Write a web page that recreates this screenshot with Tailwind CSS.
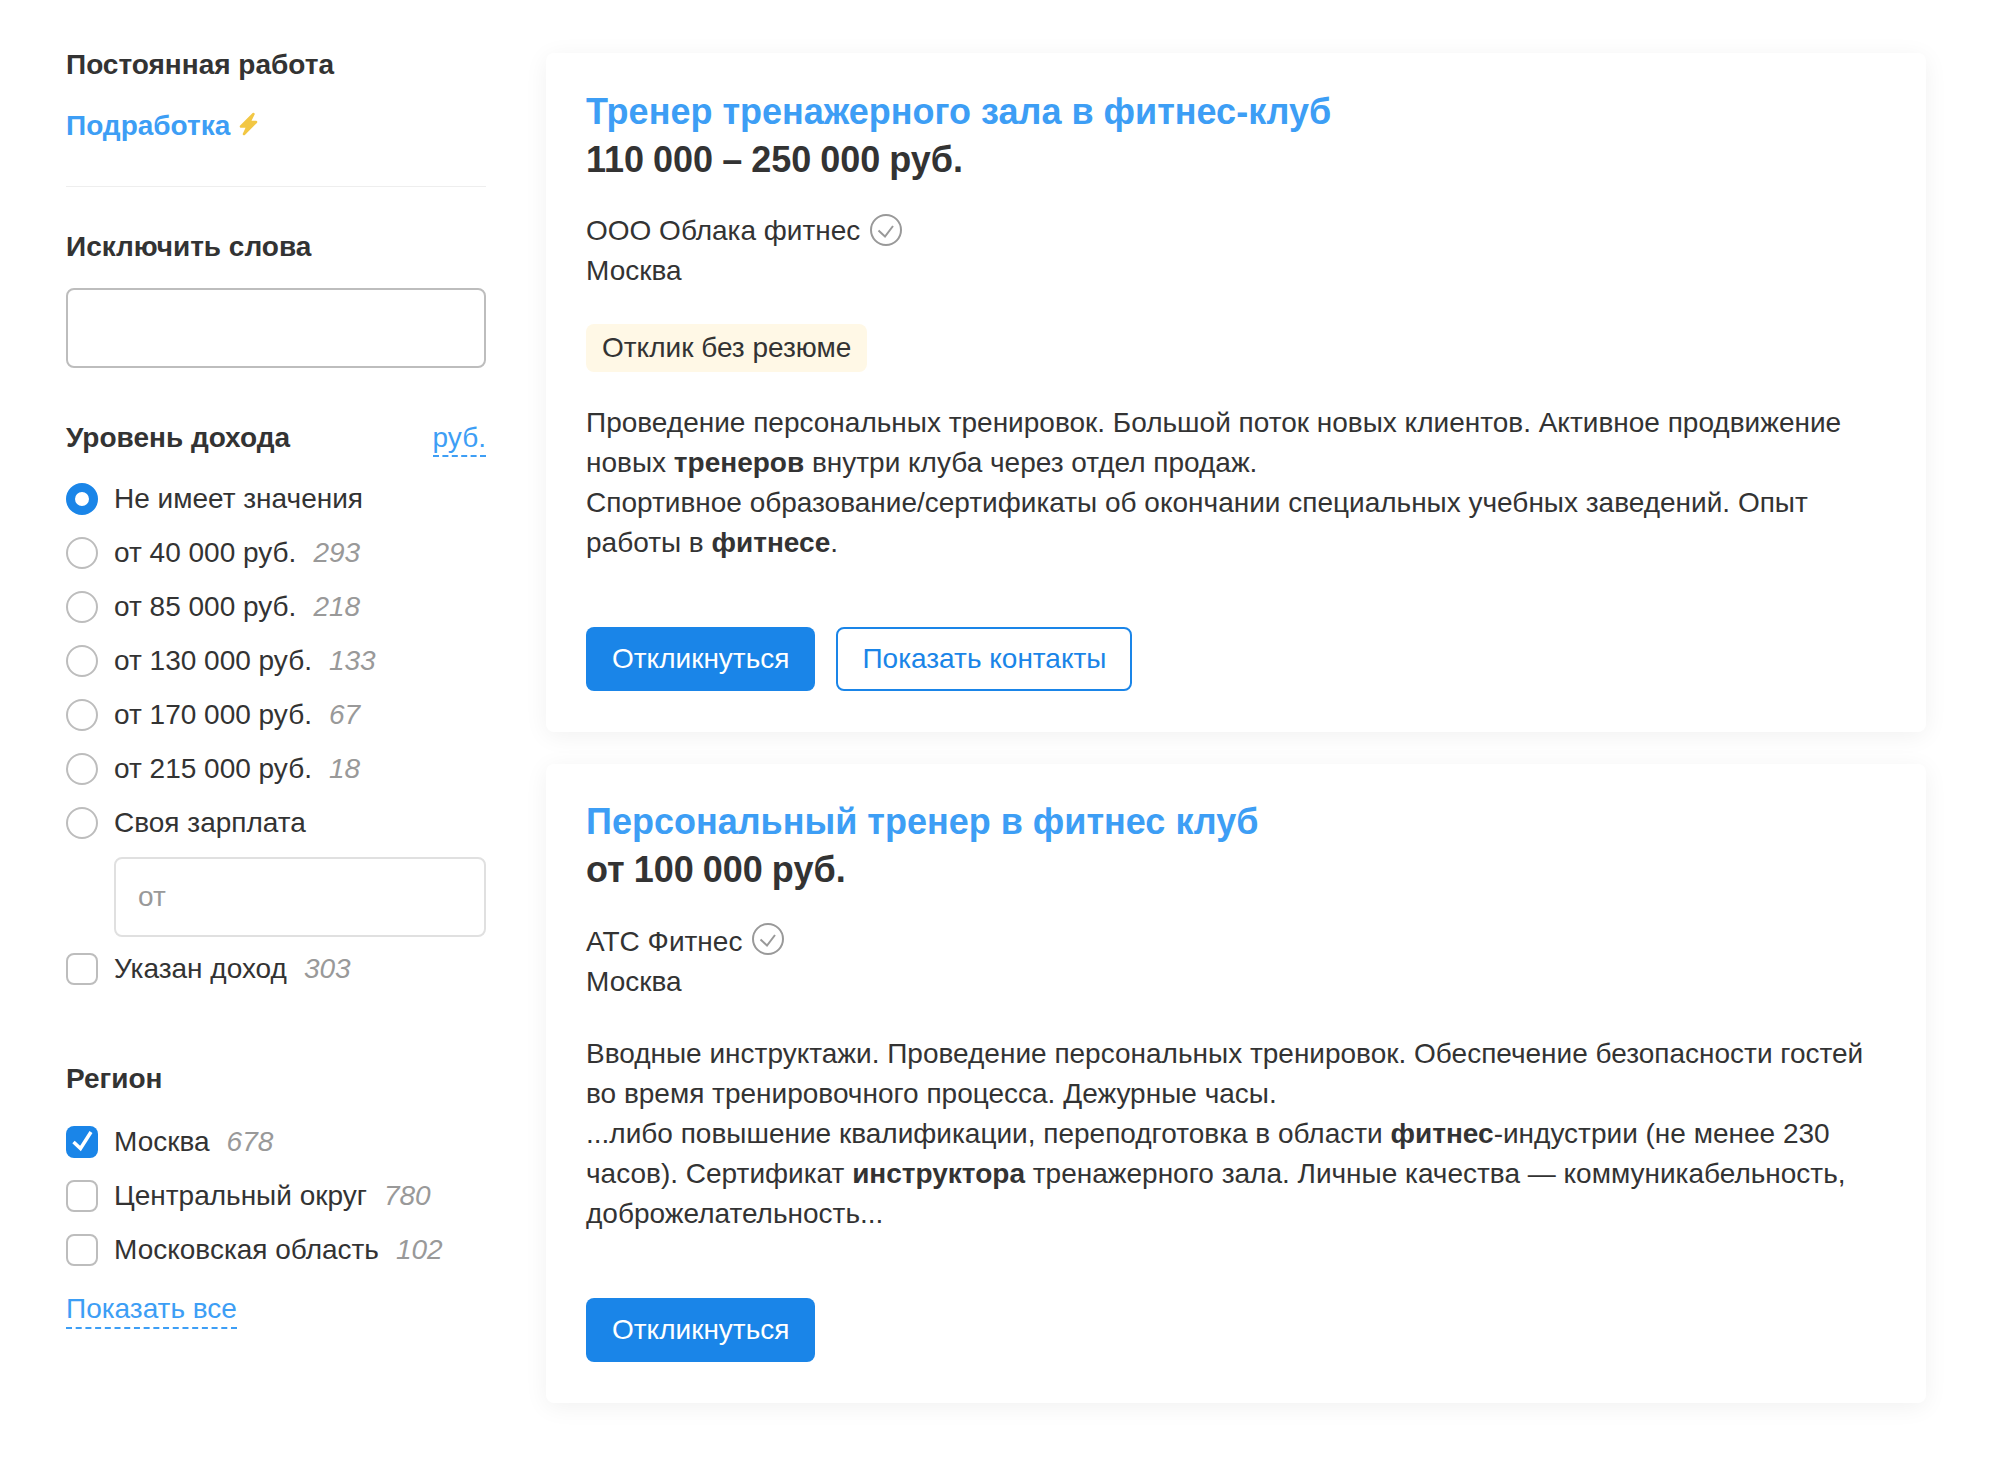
<!DOCTYPE html>
<html lang="ru">
<head>
  <meta charset="UTF-8" />
  <title>Вакансии</title>
  <script src="https://cdn.jsdelivr.net/npm/@tailwindcss/browser@4"></script>
</head>
<body class="bg-white text-[#333] font-['Liberation_Sans',Arial,sans-serif] text-[28px] leading-[40px]">
  <div class="flex items-start w-[2000px] h-[1476px] pl-[66px] pt-[53px]">

    <!-- Фильтры -->
    <aside class="w-[420px] shrink-0">
      <div class="font-bold -mt-[8px]">Постоянная работа</div>
      <div class="flex items-center mt-[21px] pb-[40px] border-b border-[#eeeeee]">
        <a class="font-bold text-[#3d9ef5]">Подработка</a>
        <svg class="ml-[9px] -mt-[5px]" width="19" height="24" viewBox="0 0 19 24"><path d="M14.500 2 2 14.500h6.500L5 22 17 10H10.500z" fill="#f2c744" stroke="#f2c744" stroke-width="2.500" stroke-linejoin="round"/></svg>
      </div>

      <div class="font-bold mt-[40px]">Исключить слова</div>
      <div class="mt-[21px] h-[80px] rounded-[8px] border-2 border-[#bdbdbd]"></div>

      <div class="flex justify-between mt-[50px]">
        <div class="font-bold">Уровень дохода</div>
        <a class="text-[#3d9ef5] border-b-2 border-dashed border-[#3d9ef5] h-[39px]">руб.</a>
      </div>

      <div class="mt-[14px] flex flex-col">
        <label class="flex items-center h-[54px]">
          <span class="w-[32px] h-[32px] rounded-full border-[9px] border-[#1a85e8] bg-white"></span>
          <span class="ml-[16px]">Не имеет значения</span>
        </label>
        <label class="flex items-center h-[54px]">
          <span class="w-[32px] h-[32px] rounded-full border-2 border-[#bdbdbd]"></span>
          <span class="ml-[16px]">от 40 000 руб.</span><i class="ml-[17px] text-[#999]">293</i>
        </label>
        <label class="flex items-center h-[54px]">
          <span class="w-[32px] h-[32px] rounded-full border-2 border-[#bdbdbd]"></span>
          <span class="ml-[16px]">от 85 000 руб.</span><i class="ml-[17px] text-[#999]">218</i>
        </label>
        <label class="flex items-center h-[54px]">
          <span class="w-[32px] h-[32px] rounded-full border-2 border-[#bdbdbd]"></span>
          <span class="ml-[16px]">от 130 000 руб.</span><i class="ml-[17px] text-[#999]">133</i>
        </label>
        <label class="flex items-center h-[54px]">
          <span class="w-[32px] h-[32px] rounded-full border-2 border-[#bdbdbd]"></span>
          <span class="ml-[16px]">от 170 000 руб.</span><i class="ml-[17px] text-[#999]">67</i>
        </label>
        <label class="flex items-center h-[54px]">
          <span class="w-[32px] h-[32px] rounded-full border-2 border-[#bdbdbd]"></span>
          <span class="ml-[16px]">от 215 000 руб.</span><i class="ml-[17px] text-[#999]">18</i>
        </label>
        <label class="flex items-center h-[54px]">
          <span class="w-[32px] h-[32px] rounded-full border-2 border-[#bdbdbd]"></span>
          <span class="ml-[16px]">Своя зарплата</span>
        </label>
      </div>

      <div class="ml-[48px] mt-[7px] h-[80px] rounded-[8px] border-2 border-[#e0e0e0] flex items-center pl-[22px] text-[#999]">от</div>

      <label class="flex items-center h-[54px] mt-[5px]">
        <span class="w-[32px] h-[32px] rounded-[8px] border-2 border-[#bdbdbd]"></span>
        <span class="ml-[16px]">Указан доход</span><i class="ml-[17px] text-[#999]">303</i>
      </label>

      <div class="font-bold mt-[63px]">Регион</div>
      <div class="mt-[16px] flex flex-col">
        <label class="flex items-center h-[54px]">
          <span class="w-[32px] h-[32px] rounded-[8px] bg-[#1a85e8]">
            <svg width="32" height="32" viewBox="0 0 32 32"><path d="M7.500 16l7 6.500L25 6" fill="none" stroke="#fff" stroke-width="3.500"/></svg>
          </span>
          <span class="ml-[16px]">Москва</span><i class="ml-[17px] text-[#999]">678</i>
        </label>
        <label class="flex items-center h-[54px]">
          <span class="w-[32px] h-[32px] rounded-[8px] border-2 border-[#bdbdbd]"></span>
          <span class="ml-[16px]">Центральный округ</span><i class="ml-[17px] text-[#999]">780</i>
        </label>
        <label class="flex items-center h-[54px]">
          <span class="w-[32px] h-[32px] rounded-[8px] border-2 border-[#bdbdbd]"></span>
          <span class="ml-[16px]">Московская область</span><i class="ml-[17px] text-[#999]">102</i>
        </label>
      </div>
      <a class="inline-block mt-[12px] text-[#3d9ef5] border-b-2 border-dashed border-[#3d9ef5] h-[40px]">Показать все</a>
    </aside>

    <!-- Вакансии -->
    <main class="ml-[60px] w-[1380px] flex flex-col gap-[32px]">
      <article class="bg-white rounded-[8px] shadow-[0_4px_24px_rgba(0,0,0,0.06)] px-[40px] pt-[35px] h-[679px]">
        <a class="block text-[#3d9ef5] font-bold text-[36px] leading-[48px]">Тренер тренажерного зала в фитнес-клуб</a>
        <div class="font-bold text-[36px] leading-[48px] [word-spacing:-1px]">110 000 – 250 000 руб.</div>
        <div class="flex items-center mt-[27px]">
          <span>ООО Облака фитнес</span>
          <svg class="ml-[10px] -mt-[2px]" width="32" height="32" viewBox="0 0 32 32" fill="none" stroke="#999"><circle cx="16" cy="16" r="15" stroke-width="2"/><path d="M8.500 16.500l6.500 6L23 12" stroke-width="2"/></svg>
        </div>
        <div>Москва</div>
        <div class="inline-block mt-[33px] bg-[#fff8e6] rounded-[8px] h-[48px] px-[16px] leading-[48px]">Отклик без резюме</div>
        <p class="mt-[31px]">Проведение персональных тренировок. Большой поток новых клиентов. Активное продвижение<br>новых <b>тренеров</b> внутри клуба через отдел продаж.<br>Спортивное образование/сертификаты об окончании специальных учебных заведений. Опыт<br>работы в <b>фитнесе</b>.</p>
        <div class="flex gap-[21px] mt-[64px]">
          <button class="h-[64px] px-[26px] bg-[#1a85e8] text-white rounded-[8px]">Откликнуться</button>
          <button class="h-[64px] px-[24px] bg-white text-[#1a85e8] border-2 border-[#1a85e8] rounded-[8px]">Показать контакты</button>
        </div>
      </article>

      <article class="bg-white rounded-[8px] shadow-[0_4px_24px_rgba(0,0,0,0.06)] px-[40px] pt-[34px] h-[639px]">
        <a class="block text-[#3d9ef5] font-bold text-[36px] leading-[48px]">Персональный тренер в фитнес клуб</a>
        <div class="font-bold text-[36px] leading-[48px] [word-spacing:-1px]">от 100 000 руб.</div>
        <div class="flex items-center mt-[28px]">
          <span>АТС Фитнес</span>
          <svg class="ml-[10px] -mt-[6px]" width="32" height="32" viewBox="0 0 32 32" fill="none" stroke="#999"><circle cx="16" cy="16" r="15" stroke-width="2"/><path d="M8.500 16.500l6.500 6L23 12" stroke-width="2"/></svg>
        </div>
        <div>Москва</div>
        <p class="mt-[32px]">Вводные инструктажи. Проведение персональных тренировок. Обеспечение безопасности гостей<br>во время тренировочного процесса. Дежурные часы.<br>...либо повышение квалификации, переподготовка в области <b>фитнес</b>-индустрии (не менее 230<br>часов). Сертификат <b>инструктора</b> тренажерного зала. Личные качества — коммуникабельность,<br>доброжелательность...</p>
        <div class="flex mt-[64px]">
          <button class="h-[64px] px-[26px] bg-[#1a85e8] text-white rounded-[8px]">Откликнуться</button>
        </div>
      </article>
    </main>
  </div>
</body>
</html>
